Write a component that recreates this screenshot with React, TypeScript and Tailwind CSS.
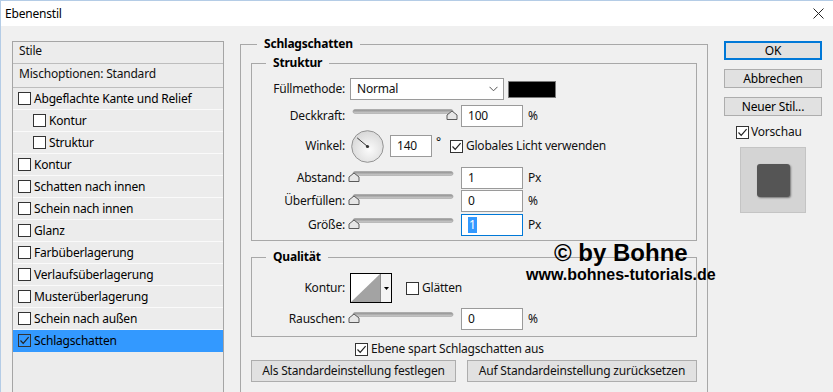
import React from "react";

const FONT = { fontFamily: '"Segoe UI", "Noto Sans", sans-serif' };

function Check({ checked = false, bg = "bg-white" }: { checked?: boolean; bg?: string }) {
  return (
    <span className={"inline-flex w-[13px] h-[13px] shrink-0 items-center justify-center border border-[#333333] " + bg}>
      {checked && (
        <svg width="11" height="11" viewBox="0 0 11 11">
          <path d="M1.5 5.5 L4.2 8.3 L9.6 2.2" stroke="#222" strokeWidth="1.2" fill="none" />
        </svg>
      )}
    </span>
  );
}

function Slider({ pos }: { pos: number }) {
  return (
    <svg width="112" height="22" viewBox="0 0 112 22" className="shrink-0">
      <defs>
        <linearGradient id="trk" x1="0" y1="0" x2="0" y2="1">
          <stop offset="0" stopColor="#8c8c8c" />
          <stop offset="1" stopColor="#d2d2d2" />
        </linearGradient>
      </defs>
      <rect x="5" y="4.5" width="100" height="4" rx="2" fill="url(#trk)" stroke="#a0a0a0" strokeWidth="0.6" />
      <path
        d={`M${pos - 5} 14.5 L${pos - 5} 10 L${pos} 6 L${pos + 5} 10 L${pos + 5} 14.5 Z`}
        fill="#e6e6e6"
        stroke="#5a5a5a"
        strokeWidth="1"
      />
    </svg>
  );
}

function Input({ value, w = "w-[62px]", focused = false }: { value: string; w?: string; focused?: boolean }) {
  return (
    <div
      className={
        "h-[22px] bg-white flex items-center pl-[6px] shrink-0 " +
        w +
        (focused ? " border border-[#0078d7]" : " border border-[#9a9a9a]")
      }
    >
      {focused ? <span className="bg-[#3399ff] text-white px-[1px] leading-[16px]">{value}</span> : <span>{value}</span>}
    </div>
  );
}

function ListRow({
  label,
  indent = false,
  selected = false,
  checked = false,
}: {
  label: string;
  indent?: boolean;
  selected?: boolean;
  checked?: boolean;
}) {
  return (
    <div
      className={
        "h-[22px] flex items-center border-b " +
        (selected ? "bg-[#3399ff] border-[#3399ff]" : "bg-[#ececec] border-[#fafafa]") +
        (indent ? " pl-[20px]" : " pl-[5px]")
      }
    >
      <Check checked={checked} bg={selected ? "bg-transparent" : "bg-white"} />
      <span className="ml-[3px] text-[12px] text-black">{label}</span>
    </div>
  );
}

function SliderRow({
  label,
  pos,
  value,
  unit,
  mt,
  focused = false,
}: {
  label: string;
  pos: number;
  value: string;
  unit: string;
  mt: string;
  focused?: boolean;
}) {
  return (
    <div className={"h-[22px] flex items-center " + mt}>
      <div className="w-[93px] text-right">{label}</div>
      <div className="ml-[3px]">
        <Slider pos={pos} />
      </div>
      <div className="ml-[1px]">
        <Input value={value} focused={focused} />
      </div>
      <span className="ml-[5px]">{unit}</span>
    </div>
  );
}

export default function App() {
  return (
    <div
      style={FONT}
      className="w-[833px] h-[392px] overflow-hidden bg-[#f0f0f0] text-[12px] tracking-[-0.2px] text-[#111] relative border-l border-t border-[#b4cce6]"
    >
      {/* Title bar */}
      <div className="h-[25px] bg-white flex items-center justify-between pl-[4px] pr-[9px]">
        <span className="text-[12px] text-black">Ebenenstil</span>
        <svg width="11" height="11" viewBox="0 0 11 11">
          <path d="M0.5 0.5 L10.5 10.5 M10.5 0.5 L0.5 10.5" stroke="#222" strokeWidth="1" />
        </svg>
      </div>

      <div className="flex">
        {/* Left list */}
        <div className="ml-[11px] mt-[15px] w-[212px] h-[380px] border border-[#a5a5a5] bg-[#ececec] shrink-0">
          <div className="h-[22px] flex items-center pl-[6px] pb-[3px] border-b border-[#bdbdbd]">Stile</div>
          <div className="h-[24px] flex items-center pl-[6px] pb-[3px] border-b border-[#bdbdbd]">Mischoptionen: Standard</div>
          <ListRow label="Abgeflachte Kante und Relief" />
          <ListRow label="Kontur" indent />
          <ListRow label="Struktur" indent />
          <ListRow label="Kontur" />
          <ListRow label="Schatten nach innen" />
          <ListRow label="Schein nach innen" />
          <ListRow label="Glanz" />
          <ListRow label="Farbüberlagerung" />
          <ListRow label="Verlaufsüberlagerung" />
          <ListRow label="Musterüberlagerung" />
          <ListRow label="Schein nach außen" />
          <ListRow label="Schlagschatten" selected checked />
        </div>

        {/* Middle */}
        <fieldset className="ml-[16px] mt-[10px] w-[468px] h-[400px] border border-[#a8a8a8] px-[10px] shrink-0">
          <legend className="ml-[6px] px-[7px] font-bold h-[16px] leading-[16px] text-black">Schlagschatten</legend>

          <fieldset className="mt-[3px] border border-[#a8a8a8] pb-[4px]">
            <legend className="ml-[14px] px-[7px] font-bold h-[16px] leading-[16px] text-black">Struktur</legend>

            <div className="h-[22px] flex items-center mt-[7px]">
              <div className="w-[93px] text-right">Füllmethode:</div>
              <div className="ml-[5px] w-[154px] h-[22px] bg-white border border-[#9a9a9a] flex items-center justify-between pl-[6px] pr-[5px]">
                <span>Normal</span>
                <svg width="9" height="6" viewBox="0 0 9 6">
                  <path d="M0.5 0.8 L4.5 4.8 L8.5 0.8" stroke="#555" fill="none" strokeWidth="1" />
                </svg>
              </div>
              <div className="ml-[4px] w-[48px] h-[17px] bg-black border border-[#7a7a7a]" />
            </div>

            <SliderRow label="Deckkraft:" pos={104} value="100" unit="%" mt="mt-[5px]" />

            <div className="h-[32px] flex items-center mt-[3px]">
              <div className="w-[93px] text-right">Winkel:</div>
              <svg width="33" height="33" viewBox="0 0 33 33" className="ml-[6px] shrink-0">
                <defs>
                  <radialGradient id="dial" cx="0.55" cy="0.6" r="0.6">
                    <stop offset="0" stopColor="#fbfbfb" />
                    <stop offset="1" stopColor="#d8d8d8" />
                  </radialGradient>
                </defs>
                <circle cx="16.5" cy="16.5" r="15.8" fill="url(#dial)" stroke="#8a8a8a" strokeWidth="0.9" />
                <line x1="16.5" y1="16.5" x2="6.2" y2="7.9" stroke="#333" strokeWidth="1" />
                <circle cx="16.5" cy="16.5" r="1.6" fill="#333" />
              </svg>
              <div className="ml-[6px]">
                <Input value="140" w="w-[42px]" />
              </div>
              <span className="ml-[4px] -mt-[8px]">°</span>
              <div className="ml-[9px] flex items-center">
                <Check checked />
                <span className="ml-[3px]">Globales Licht verwenden</span>
              </div>
            </div>

            <SliderRow label="Abstand:" pos={6} value="1" unit="Px" mt="mt-[5px]" />
            <SliderRow label="Überfüllen:" pos={6} value="0" unit="%" mt="mt-[1px]" />
            <SliderRow label="Größe:" pos={6} value="1" unit="Px" mt="mt-[2px]" focused />
          </fieldset>

          <fieldset className="mt-[8px] border border-[#a8a8a8] pb-[6px]">
            <legend className="ml-[14px] px-[7px] font-bold h-[16px] leading-[16px] text-black">Qualität</legend>

            <div className="h-[30px] flex items-center mt-[8px]">
              <div className="w-[93px] text-right">Kontur:</div>
              <div className="ml-[5px] w-[42px] h-[30px] border border-black bg-white flex shrink-0">
                <svg width="29" height="28" viewBox="0 0 29 28" className="shrink-0">
                  <path d="M0 28 L29 0 L29 28 Z" fill="#a3a3a3" />
                </svg>
                <div className="flex-1 border-l border-[#8a8a8a] bg-[#f4f4f4] flex items-center justify-center">
                  <svg width="5" height="3" viewBox="0 0 5 3">
                    <path d="M0 0 L5 0 L2.5 3 Z" fill="#000" />
                  </svg>
                </div>
              </div>
              <div className="ml-[14px] flex items-center">
                <Check />
                <span className="ml-[3px]">Glätten</span>
              </div>
            </div>

            <SliderRow label="Rauschen:" pos={6} value="0" unit="%" mt="mt-[5px]" />
          </fieldset>

          <div className="h-[16px] mt-[4px] flex items-center pl-[104px]">
            <Check checked />
            <span className="ml-[3px]">Ebene spart Schlagschatten aus</span>
          </div>

          <div className="mt-[3px] flex gap-[11px]">
            <div className="w-[205px] h-[22px] bg-[#e1e1e1] border border-[#adadad] flex items-center justify-center">
              Als Standardeinstellung festlegen
            </div>
            <div className="w-[230px] h-[22px] bg-[#e1e1e1] border border-[#adadad] flex items-center justify-center">
              Auf Standardeinstellung zurücksetzen
            </div>
          </div>
        </fieldset>

        {/* Right */}
        <div className="ml-[16px] mt-[15px] w-[98px] flex flex-col items-center shrink-0">
          <div className="w-[98px] h-[19px] bg-[#e1e1e1] border-2 border-[#0078d7] flex items-center justify-center text-black">
            OK
          </div>
          <div className="mt-[9px] w-[98px] h-[19px] bg-[#e1e1e1] border border-[#adadad] flex items-center justify-center text-black">
            Abbrechen
          </div>
          <div className="mt-[9px] w-[98px] h-[19px] bg-[#e1e1e1] border border-[#adadad] flex items-center justify-center text-black">
            Neuer Stil...
          </div>
          <div className="mt-[9px] h-[14px] flex items-center self-start ml-[12px]">
            <Check checked />
            <span className="ml-[2px]">Vorschau</span>
          </div>
          <div className="mt-[8px] w-[66px] h-[66px] bg-[#d4d4d4] border border-[#c4c4c4] flex items-center justify-center">
            <div className="w-[33px] h-[33px] bg-[#555555] rounded-[3px] shadow-[1px_1px_2px_rgba(0,0,0,0.45)]" />
          </div>
        </div>
      </div>

      {/* Watermark overlay */}
      <div
        className="absolute left-[553px] top-[239px] text-[24px] font-bold leading-[26px] tracking-normal text-black"
        style={{ fontFamily: '"Liberation Sans", Arial, sans-serif' }}
      >
        © by Bohne
      </div>
      <div
        className="absolute left-[525px] top-[265px] text-[16px] font-bold leading-[18px] tracking-normal text-black"
        style={{ fontFamily: '"Liberation Sans", Arial, sans-serif' }}
      >
        www.bohnes-tutorials.de
      </div>
    </div>
  );
}
